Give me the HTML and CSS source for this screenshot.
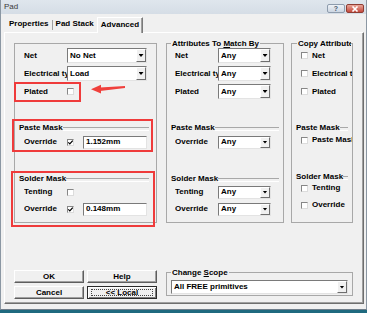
FILE: index.html
```html
<!DOCTYPE html>
<html>
<head>
<meta charset="utf-8">
<title>Pad</title>
<link rel="stylesheet" href="styles.css">
</head>
<body>
<div class="window">
  <div class="titlebar">
    <span class="title">Pad</span>
    <span class="tb-btn tb-help">?</span>
    <span class="tb-btn tb-close"><svg width="8" height="6" viewBox="0 0 8 6"><path d="M1.5 0.5L6.5 5.5M6.5 0.5L1.5 5.5" stroke="#fff" stroke-width="1.6"/></svg></span>
  </div>
  <div class="client">
    <div class="tabs">
      <span class="tab">Properties</span>
      <span class="tab-sep"></span>
      <span class="tab">Pad Stack</span>
      <span class="tab active">Advanced</span>
    </div>
    <div class="panel">
      <div class="top-row">
        <fieldset class="group g-left">
          <div class="row"><span class="lbl">Net</span><div class="combo w80"><span class="combo-text">No Net</span><span class="drop"><i class="tri"></i></span></div></div>
          <div class="row"><span class="lbl">Electrical type</span><div class="combo w80"><span class="combo-text">Load</span><span class="drop"><i class="tri"></i></span></div></div>
          <div class="row"><span class="lbl">Plated</span><span class="chk"></span></div>
          <div class="sec sec-paste">Paste Mask</div>
          <div class="srow s-paste"><span class="lbl">Override</span><span class="chk"><svg width="5" height="5" viewBox="0 0 5 5"><path d="M0.3 2.3L1.8 3.9L4.7 0.6" fill="none" stroke="#000" stroke-width="1.2"/></svg></span><div class="field">1.152mm</div></div>
          <div class="sec sec-solder">Solder Mask</div>
          <div class="srow s-tent"><span class="lbl">Tenting</span><span class="chk"></span></div>
          <div class="srow s-over"><span class="lbl">Override</span><span class="chk"><svg width="5" height="5" viewBox="0 0 5 5"><path d="M0.3 2.3L1.8 3.9L4.7 0.6" fill="none" stroke="#000" stroke-width="1.2"/></svg></span><div class="field">0.148mm</div></div>
        </fieldset>
        <fieldset class="group g-mid">
          <legend>Attributes To <u>M</u>atch By</legend>
          <div class="row"><span class="lbl">Net</span><div class="combo w53"><span class="combo-text">Any</span><span class="drop"><i class="tri"></i></span></div></div>
          <div class="row"><span class="lbl">Electrical type</span><div class="combo w53"><span class="combo-text">Any</span><span class="drop"><i class="tri"></i></span></div></div>
          <div class="row"><span class="lbl">Plated</span><div class="combo w53"><span class="combo-text">Any</span><span class="drop"><i class="tri"></i></span></div></div>
          <div class="sec sec-paste">Paste Mask</div>
          <div class="srow s-paste"><span class="lbl">Override</span><div class="combo w53 sm"><span class="combo-text">Any</span><span class="drop"><i class="tri"></i></span></div></div>
          <div class="sec sec-solder">Solder Mask</div>
          <div class="srow s-tent"><span class="lbl">Tenting</span><div class="combo w53 sm"><span class="combo-text">Any</span><span class="drop"><i class="tri"></i></span></div></div>
          <div class="srow s-over"><span class="lbl">Override</span><div class="combo w53 sm"><span class="combo-text">Any</span><span class="drop"><i class="tri"></i></span></div></div>
        </fieldset>
        <fieldset class="group g-right">
          <legend>Copy Attributes</legend>
          <div class="row"><span class="chk"></span><span class="clbl">Net</span></div>
          <div class="row"><span class="chk"></span><span class="clbl">Electrical type</span></div>
          <div class="row"><span class="chk"></span><span class="clbl">Plated</span></div>
          <div class="sec sec-paste">Paste Mask</div>
          <div class="srow r-paste"><span class="chk"></span><span class="clbl">Paste Mask</span></div>
          <div class="sec sec-solder">Solder Mask</div>
          <div class="srow r-tent"><span class="chk"></span><span class="clbl">Tenting</span></div>
          <div class="srow r-over"><span class="chk"></span><span class="clbl">Override</span></div>
        </fieldset>
      </div>
      <div class="bottom-row">
        <div class="buttons">
          <div class="btn">OK</div>
          <div class="btn">Help</div>
          <div class="btn">Cancel</div>
          <div class="btn default"><span class="focus">&lt;&lt; Local</span></div>
        </div>
        <fieldset class="group g-scope">
          <legend>Change <u>S</u>cope</legend>
          <div class="combo w177 sm2"><span class="combo-text">All FREE primitives</span><span class="drop"><i class="tri"></i></span></div>
        </fieldset>
      </div>
    </div>
  </div>
  <svg class="annot" width="367" height="310" viewBox="0 0 367 310">
    <rect x="15" y="83" width="65" height="18" fill="none" stroke="#ef3b3b" stroke-width="2"/>
    <rect x="13" y="120" width="139" height="31" fill="none" stroke="#ef3b3b" stroke-width="2"/>
    <rect x="12" y="172" width="142" height="54" fill="none" stroke="#ef3b3b" stroke-width="2"/>
    <polygon points="91,89.3 101,84.8 101,93.6" fill="#f0403c"/>
    <polygon points="100,87.6 125,86 125,88 100,91" fill="#f0403c"/>
  </svg>
</div>
</body>
</html>
```
FILE: styles.css
```css
* { box-sizing: border-box; }
html, body { margin: 0; padding: 0; }
body {
  width: 367px;
  height: 313px;
  overflow: hidden;
  background: #1f6a7f;
  font: bold 8px/1 "Liberation Sans", Arial, sans-serif;
  color: #000;
}
.window {
  position: relative;
  width: 367px;
  height: 310px;
  background: #f0f0f0;
  border-left: 1px solid #8b97a3;
  border-right: 1px solid #8b97a3;
  border-bottom: 1px solid #6f7d8a;
  display: flex;
  flex-direction: column;
}
.titlebar {
  height: 14px;
  flex: none;
  display: flex;
  align-items: flex-start;
  padding: 0 2px 0 3px;
  background: linear-gradient(#dfe6ed, #d5dde6);
}
.title {
  flex: 1;
  font-weight: normal;
  font-size: 8px;
  line-height: 14px;
  color: #3a3a3a;
}
.tb-btn {
  margin-top: 4px;
  width: 18px;
  height: 9px;
  display: flex;
  align-items: center;
  justify-content: center;
  border-radius: 2px;
}
.tb-help {
  margin-right: 1px;
  background: linear-gradient(#eef2f7, #ccd6e2);
  border: 1px solid #8e9cad;
  color: #4a5a6e;
  font-size: 7px;
  line-height: 7px;
}
.tb-close {
  background: linear-gradient(#e9a699, #c54a3e);
  border: 1px solid #8f3d33;
}
.client {
  flex: 1;
  display: flex;
  flex-direction: column;
  padding: 3px 2px 5px 3px;
}
.tabs {
  height: 15px;
  flex: none;
  display: flex;
  align-items: stretch;
  padding-left: 2px;
}
.tab {
  padding: 0 3px;
  line-height: 14px;
  white-space: nowrap;
}
.tab-sep {
  width: 1px;
  background: #a0a0a0;
  margin: 3px 0 2px;
}
.tab.active {
  position: relative;
  z-index: 1;
  height: 16px;
  margin-bottom: -1px;
  border: 1px solid;
  border-color: #fff #7a7a7a transparent #fff;
  border-bottom: none;
  background: #f0f0f0;
  line-height: 13px;
  box-shadow: inset -1px 0 0 #a0a0a0;
}
.panel {
  flex: 1;
  display: flex;
  flex-direction: column;
  border: 1px solid;
  border-color: #fff #6e6e6e #6e6e6e #fff;
  box-shadow: inset -1px -1px 0 #a0a0a0;
  padding: 6px 0 4px 9px;
}
.top-row {
  display: flex;
  align-items: stretch;
}
.group {
  margin: 0;
  min-width: 0;
  border: 1px solid #a8a8a8;
  display: flex;
  flex-direction: column;
}
.group legend {
  padding: 0 1px;
  margin-left: 0;
  line-height: 9px;
  white-space: nowrap;
}
.g-left {
  width: 143px;
  margin-top: 4px;
  padding: 4px 7px 6px 9px;
}
.g-mid {
  width: 118px;
  margin-left: 9px;
  padding: 0 4px 6px 8px;
}
.g-mid legend { margin-left: -4px; }
.g-right {
  width: 62px;
  margin-left: 7px;
  padding: 0 4px 6px 9px;
  overflow: hidden;
}
.g-right legend {
  margin-left: -4px;
  max-width: 54px;
  overflow: hidden;
}
.row, .srow {
  display: flex;
  align-items: center;
  white-space: nowrap;
  flex: none;
}
.row { height: 15px; }
.row + .row { margin-top: 3px; }
.srow { height: 14px; }
.lbl {
  width: 43px;
  flex: none;
  overflow: hidden;
  white-space: nowrap;
}
.clbl {
  margin-left: 4px;
  white-space: nowrap;
}
.sec {
  display: flex;
  align-items: center;
  height: 10px;
  margin-left: -5px;
  white-space: nowrap;
  flex: none;
}
.g-mid .sec { margin-left: -4px; }
.sec::after {
  content: "";
  flex: 1;
  height: 2px;
  border-top: 1px solid #a8a8a8;
  border-bottom: 1px solid #fff;
  margin-top: 1px;
}
.sec-paste { margin-top: 24px; }
.sec-solder { margin-top: 25px; }
.s-paste { margin-top: 2px; }
.s-tent { margin-top: 1px; }
.s-over { margin-top: 3px; }
.r-paste { margin-top: 0; }
.r-tent { margin-top: -1px; }
.r-over { margin-top: 3px; }

.combo {
  height: 15px;
  display: flex;
  flex: none;
  background: #fff;
  border: 1px solid;
  border-color: #7a7a7a #e3e3e3 #e3e3e3 #7a7a7a;
}
.combo.sm { height: 13px; }
.combo.sm2 { height: 14px; }
.w80 { width: 80px; }
.w53 { width: 53px; }
.w177 { width: 177px; }
.combo-text {
  flex: 1;
  min-width: 0;
  overflow: hidden;
  padding-left: 2px;
  display: flex;
  align-items: center;
  white-space: nowrap;
}
.drop {
  width: 10px;
  flex: none;
  background: #f0f0f0;
  border: 1px solid;
  border-color: #fff #6e6e6e #6e6e6e #fff;
  display: flex;
  align-items: center;
  justify-content: center;
}
.tri {
  display: block;
  width: 5px;
  height: 3px;
  background: #000;
  clip-path: polygon(0 0, 100% 0, 50% 100%);
}
.chk {
  width: 7px;
  height: 7px;
  flex: none;
  background: #fff;
  border: 1px solid;
  border-color: #878787 #dcdcdc #dcdcdc #878787;
  display: flex;
  align-items: center;
  justify-content: center;
}
.field {
  width: 64px;
  height: 13px;
  margin-left: 9px;
  flex: none;
  background: #fff;
  border: 1px solid;
  border-color: #7a7a7a #e3e3e3 #e3e3e3 #7a7a7a;
  padding-left: 2px;
  display: flex;
  align-items: center;
}
.bottom-row {
  display: flex;
  align-items: flex-start;
  margin-top: 47px;
}
.buttons {
  display: grid;
  grid-template-columns: 70px 70px;
  grid-auto-rows: 13px;
  gap: 3px;
}
.btn {
  display: flex;
  align-items: center;
  justify-content: center;
  background: #f0f0f0;
  border: 1px solid;
  border-color: #fff #5e5e5e #5e5e5e #fff;
  box-shadow: inset -1px -1px 0 #a0a0a0;
  white-space: nowrap;
}
.btn.default {
  border: 1px solid #2a2a2a;
  box-shadow: inset 1px 1px 0 #fff, inset -1px -1px 0 #7a7a7a;
  padding: 2px 3px;
}
.focus {
  flex: 1;
  align-self: stretch;
  display: flex;
  align-items: center;
  justify-content: center;
  border: 1px dotted #444;
}
.g-scope {
  width: 187px;
  margin-left: 9px;
  margin-top: -2px;
  padding: 3px 0 1px 4px;
}
.annot {
  position: absolute;
  left: -1px;
  top: 0;
  pointer-events: none;
}
```
